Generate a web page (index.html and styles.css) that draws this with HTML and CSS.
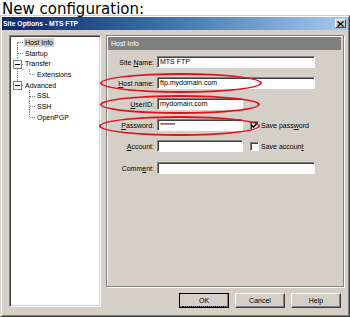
FILE: index.html
```html
<!DOCTYPE html>
<html lang="en">
<head>
    <meta charset="UTF-8">
    <title>Site Options - MTS FTP</title>
    <link rel="stylesheet" href="styles.css">
</head>
<body>
    <h1 class="caption">New configuration:</h1>

    <div class="dialog">
        <div class="titlebar">
            <span class="title">Site Options - MTS FTP</span>
            <span class="close">
                <svg width="7" height="6" viewBox="0 0 7 6"><path d="M0.5 0.5 L6.5 5.5 M6.5 0.5 L0.5 5.5" stroke="#000" stroke-width="1.4"/></svg>
            </span>
        </div>

        <div class="content">
            <ul class="tree">
                <li><span class="cell first"></span><span class="label selected">Host Info</span></li>
                <li><span class="cell tee"></span><span class="label">Startup</span></li>
                <li><span class="cell tee"><i class="box"></i></span><span class="label">Transfer</span></li>
                <li><span class="cell pipe"></span><span class="cell last"></span><span class="label">Extensions</span></li>
                <li><span class="cell last"><i class="box"></i></span><span class="label">Advanced</span></li>
                <li><span class="cell"></span><span class="cell tee"></span><span class="label">SSL</span></li>
                <li><span class="cell"></span><span class="cell tee"></span><span class="label">SSH</span></li>
                <li><span class="cell"></span><span class="cell last"></span><span class="label">OpenPGP</span></li>
            </ul>

            <div class="group">
                <div class="group-head">Host Info</div>
                <div class="form">
                    <div class="row">
                        <label>Site <u>N</u>ame:</label>
                        <span class="field wide">MTS FTP</span>
                    </div>
                    <div class="row">
                        <span class="mark mark-host"></span>
                        <label><u>H</u>ost name:</label>
                        <span class="field wide">ftp.mydomain.com</span>
                    </div>
                    <div class="row">
                        <span class="mark mark-user"></span>
                        <label><u>U</u>serID:</label>
                        <span class="field">mydomain.com</span>
                    </div>
                    <div class="row">
                        <span class="mark mark-pass"></span>
                        <label><u>P</u>assword:</label>
                        <span class="field stars">********</span>
                        <span class="check checked">
                            <svg width="7" height="7" viewBox="0 0 7 7"><path d="M0.5 3 L2.5 5.2 L6.5 1" fill="none" stroke="#000" stroke-width="1.5"/></svg>
                        </span>
                        <span class="check-label">Save pass<u>w</u>ord</span>
                    </div>
                    <div class="row">
                        <label><u>A</u>ccount:</label>
                        <span class="field"></span>
                        <span class="check"></span>
                        <span class="check-label">Save accoun<u>t</u></span>
                    </div>
                    <div class="row comment">
                        <label>Comm<u>e</u>nt:</label>
                        <span class="field wide"></span>
                    </div>
                </div>
            </div>

            <div class="buttons">
                <button class="btn default"><span class="focus">OK</span></button>
                <button class="btn">Cancel</button>
                <button class="btn">Help</button>
            </div>
        </div>
    </div>
</body>
</html>
```
FILE: styles.css
```css
body {
    margin: 0;
    background-color: #fff;
    font-family: "Liberation Sans", Arial, sans-serif;
    font-size: 7px;
    color: #000;
}

.caption {
    margin: 0;
    padding-left: 2px;
    height: 15px;
    font-family: "DejaVu Sans", sans-serif;
    font-size: 15px;
    font-weight: normal;
    line-height: 18px;
    position: relative;
    z-index: 1;
}

.dialog {
    width: 350px;
    height: 302px;
    box-sizing: border-box;
    padding: 1px;
    background-color: #d4d0c8;
    border: 1px solid;
    border-color: #d4d0c8 #404040 #404040 #d4d0c8;
    box-shadow: inset 1px 1px #fff, inset -1px -1px #808080;
}

.titlebar {
    height: 13px;
    display: flex;
    align-items: center;
    justify-content: space-between;
    padding-left: 1px;
    background: linear-gradient(to right, #0a246a, #3a6ea5 45%, #a6caf0);
}

.title {
    color: #fff;
    font-weight: bold;
    font-size: 6.8px;
}

.close {
    width: 11px;
    height: 9px;
    margin-right: 2px;
    box-sizing: border-box;
    display: flex;
    align-items: center;
    justify-content: center;
    background-color: #d4d0c8;
    border: 1px solid;
    border-color: #fff #404040 #404040 #fff;
}

.content {
    display: grid;
    grid-template-columns: 92px 238px;
    grid-template-rows: 252px auto;
    column-gap: 5px;
    padding: 5px 4px 0 7px;
}

/* tree on the left */
.tree {
    grid-row: 1 / 3;
    height: 272px;
    margin: 0;
    padding: 1px;
    list-style: none;
    box-sizing: border-box;
    background-color: #fff;
    border: 1px solid;
    border-color: #808080 #fff #fff #808080;
    box-shadow: inset 1px 1px #404040, inset -1px -1px #d4d0c8;
}

.tree li {
    display: flex;
    align-items: center;
    height: 10.7px;
}

.cell {
    position: relative;
    width: 12px;
    height: 100%;
    flex-shrink: 0;
}

.cell::before,
.cell::after {
    content: "";
    position: absolute;
}

.cell.first::before {
    left: 6px;
    top: 50%;
    bottom: 0;
    border-left: 1px dotted #808080;
}

.cell.tee::before,
.cell.pipe::before {
    left: 6px;
    top: 0;
    bottom: 0;
    border-left: 1px dotted #808080;
}

.cell.last::before {
    left: 6px;
    top: 0;
    height: 50%;
    border-left: 1px dotted #808080;
}

.cell.first::after,
.cell.tee::after,
.cell.last::after {
    left: 7px;
    right: 0;
    top: 50%;
    border-top: 1px dotted #808080;
}

.box {
    position: absolute;
    left: 2px;
    top: 50%;
    margin-top: -4px;
    width: 9px;
    height: 9px;
    box-sizing: border-box;
    background-color: #fff;
    border: 1px solid #808080;
    z-index: 1;
}

.box::after {
    content: "";
    position: absolute;
    left: 1px;
    right: 1px;
    top: 3px;
    border-top: 1px solid #000;
}

.label {
    margin-left: 1px;
    padding: 0 1px;
    line-height: 9px;
    white-space: nowrap;
}

.label.selected {
    background-color: #d4d0c8;
}

/* group on the right */
.group {
    border: 1px solid #808080;
    box-shadow: inset 1px 1px #fff, 1px 1px #fff;
}

.group-head {
    margin: 1px 2px 0 1px;
    height: 13px;
    line-height: 13px;
    padding-left: 3px;
    background-color: #808080;
    color: #fff;
}

.form {
    padding-top: 6px;
    display: flex;
    flex-direction: column;
    gap: 9px;
}

.row {
    position: relative;
    display: flex;
    align-items: center;
    height: 12px;
}

.row.comment {
    margin-top: 1px;
}

.row label {
    width: 47px;
    margin-right: 3px;
    text-align: right;
    white-space: nowrap;
}

.field {
    width: 86px;
    height: 12px;
    box-sizing: border-box;
    padding-left: 2px;
    line-height: 10px;
    background-color: #fff;
    border: 1px solid;
    border-color: #808080 #fff #fff #808080;
    box-shadow: inset 1px 1px #404040;
    white-space: nowrap;
    overflow: hidden;
}

.field.wide {
    width: 158px;
}

.field.stars {
    font-size: 6px;
    letter-spacing: -0.5px;
}

.check {
    width: 9px;
    height: 9px;
    margin-left: 7px;
    box-sizing: border-box;
    display: flex;
    align-items: center;
    justify-content: center;
    background-color: #fff;
    border: 1px solid;
    border-color: #808080 #fff #fff #808080;
    box-shadow: inset 1px 1px #404040;
}

.check-label {
    margin-left: 2px;
    white-space: nowrap;
}

.mark {
    position: absolute;
    box-sizing: border-box;
    border: 2.5px solid #e3111b;
    border-radius: 50%;
    z-index: 2;
}

.mark-host {
    left: -7px;
    top: -4px;
    width: 162px;
    height: 20px;
}

.mark-user {
    left: -7px;
    top: -3px;
    width: 160px;
    height: 19px;
}

.mark-pass {
    left: -8px;
    top: -3px;
    width: 161px;
    height: 20px;
}

/* bottom buttons */
.buttons {
    display: flex;
    justify-content: flex-end;
    gap: 6px;
    margin-top: 6px;
    padding-right: 3px;
}

.btn {
    width: 50px;
    height: 15px;
    padding: 0;
    font-family: "Liberation Sans", Arial, sans-serif;
    font-size: 7px;
    color: #000;
    background-color: #d4d0c8;
    border: 1px solid;
    border-color: #fff #404040 #404040 #fff;
    box-shadow: inset -1px -1px #808080;
}

.btn.default {
    outline: 1px solid #000;
    outline-offset: -1px;
    border-color: #fff #000 #000 #fff;
    padding: 2px 2px 1px;
}

.focus {
    display: block;
    height: 100%;
    line-height: 10px;
    border-bottom: 1px dotted #000;
}
```
